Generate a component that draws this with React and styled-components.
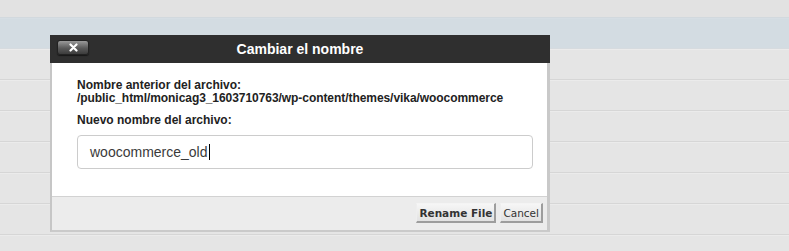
import React from 'react';
import styled, { createGlobalStyle } from 'styled-components';

const GlobalStyle = createGlobalStyle`
  html, body {
    margin: 0;
    padding: 0;
    background: #e4e4e4;
    font-family: "Liberation Sans", Arial, sans-serif;
  }
`;

const Page = styled.div`
  position: relative;
  width: 789px;
  height: 251px;
  overflow: hidden;
  background: #e4e4e4;
`;

const TopBand = styled.div`
  height: 17px;
  background: #e2e2e2;
  border-bottom: 1px solid #d2d9de;
`;

const Row = styled.div`
  height: 30px;
  background: ${(p) => (p.$selected ? '#d3dce2' : '#e5e5e5')};
  border-bottom: 1px solid ${(p) => (p.$selected ? '#d6dbdf' : '#d6d6d6')};
  box-shadow: inset 0 1px 0 ${(p) => (p.$selected ? '#d6dee4' : '#ebebeb')};
`;

const Dialog = styled.div`
  position: absolute;
  left: 50px;
  top: 35px;
  width: 500px;
  display: flex;
  flex-direction: column;
`;

const Header = styled.div`
  display: grid;
  grid-template-columns: 1fr auto 1fr;
  align-items: center;
  height: 28px;
  background: #2f2f2f;
`;

const CloseButton = styled.button`
  justify-self: start;
  margin: -4px 0 0 7px;
  width: 32px;
  height: 15px;
  padding: 0;
  display: flex;
  align-items: center;
  justify-content: center;
  border: 1px solid #222;
  border-radius: 3px;
  background: linear-gradient(#9a9a9a, #5a5a5a 55%, #3c3c3c);
  box-shadow: 0 1px 1px rgba(0, 0, 0, 0.5);
`;

const Title = styled.div`
  color: #ffffff;
  font-size: 14px;
  font-weight: bold;
  line-height: 28px;
`;

const Frame = styled.div`
  border-left: 2px solid #c6c6c6;
  border-right: 3px solid #c9c9c9;
  border-bottom: 2px solid #cacaca;
`;

const Body = styled.div`
  background: #ffffff;
  padding: 16px 14px 27px 25px;
  color: #222;
`;

const Label = styled.div`
  font-size: 12px;
  font-weight: bold;
  line-height: 13px;
  letter-spacing: ${(p) => (p.$tight ? '-0.06px' : 'normal')};
  margin-bottom: ${(p) => p.$gap || 0}px;
`;

const Field = styled.div`
  box-sizing: border-box;
  height: 34px;
  border: 1px solid #cccccc;
  border-radius: 4px;
  padding: 0 12px;
  display: flex;
  align-items: center;
  font-size: 14px;
  color: #3a3a3a;
`;

const Caret = styled.span`
  display: inline-block;
  width: 1px;
  height: 16px;
  background: #000;
  margin-left: 1px;
`;

const Footer = styled.div`
  display: flex;
  justify-content: flex-end;
  gap: 4px;
  height: 34px;
  box-sizing: border-box;
  padding: 6px 4px 0 0;
  background: #ececec;
  border-top: 1px solid #d2d2d2;
`;

const Button = styled.button`
  height: 20px;
  padding: 0 2px;
  font-family: "DejaVu Sans", Verdana, sans-serif;
  font-size: 10.5px;
  font-weight: ${(p) => (p.$primary ? 'bold' : 'normal')};
  color: #333;
  background: linear-gradient(#f6f6f6, #e2e2e2);
  border-style: solid;
  border-width: 1px 2px 2px 1px;
  border-color: #f4f4f4 #9d9d9d #9d9d9d #eeeeee;
  border-radius: 0;
  cursor: pointer;
`;

function CloseIcon() {
  return (
    <svg width="9" height="9" viewBox="0 0 9 9">
      <path d="M1.5 1.5 L7.5 7.5 M7.5 1.5 L1.5 7.5" stroke="#fff" strokeWidth="2.2" strokeLinecap="round" />
    </svg>
  );
}

export default function App() {
  const rows = [true, false, false, false, false, false, false, false];

  return (
    <Page>
      <GlobalStyle />
      <TopBand />
      {rows.map((sel, i) => (
        <Row key={i} $selected={sel} />
      ))}

      <Dialog>
        <Header>
          <CloseButton aria-label="Cerrar">
            <CloseIcon />
          </CloseButton>
          <Title>Cambiar el nombre</Title>
          <span />
        </Header>
        <Frame>
          <Body>
            <Label>Nombre anterior del archivo:</Label>
            <Label $gap={9} $tight>/public_html/monicag3_1603710763/wp-content/themes/vika/woocommerce</Label>
            <Label $gap={8}>Nuevo nombre del archivo:</Label>
            <Field>
              woocommerce_old
              <Caret />
            </Field>
          </Body>
          <Footer>
            <Button $primary>Rename File</Button>
            <Button>Cancel</Button>
          </Footer>
        </Frame>
      </Dialog>
    </Page>
  );
}
